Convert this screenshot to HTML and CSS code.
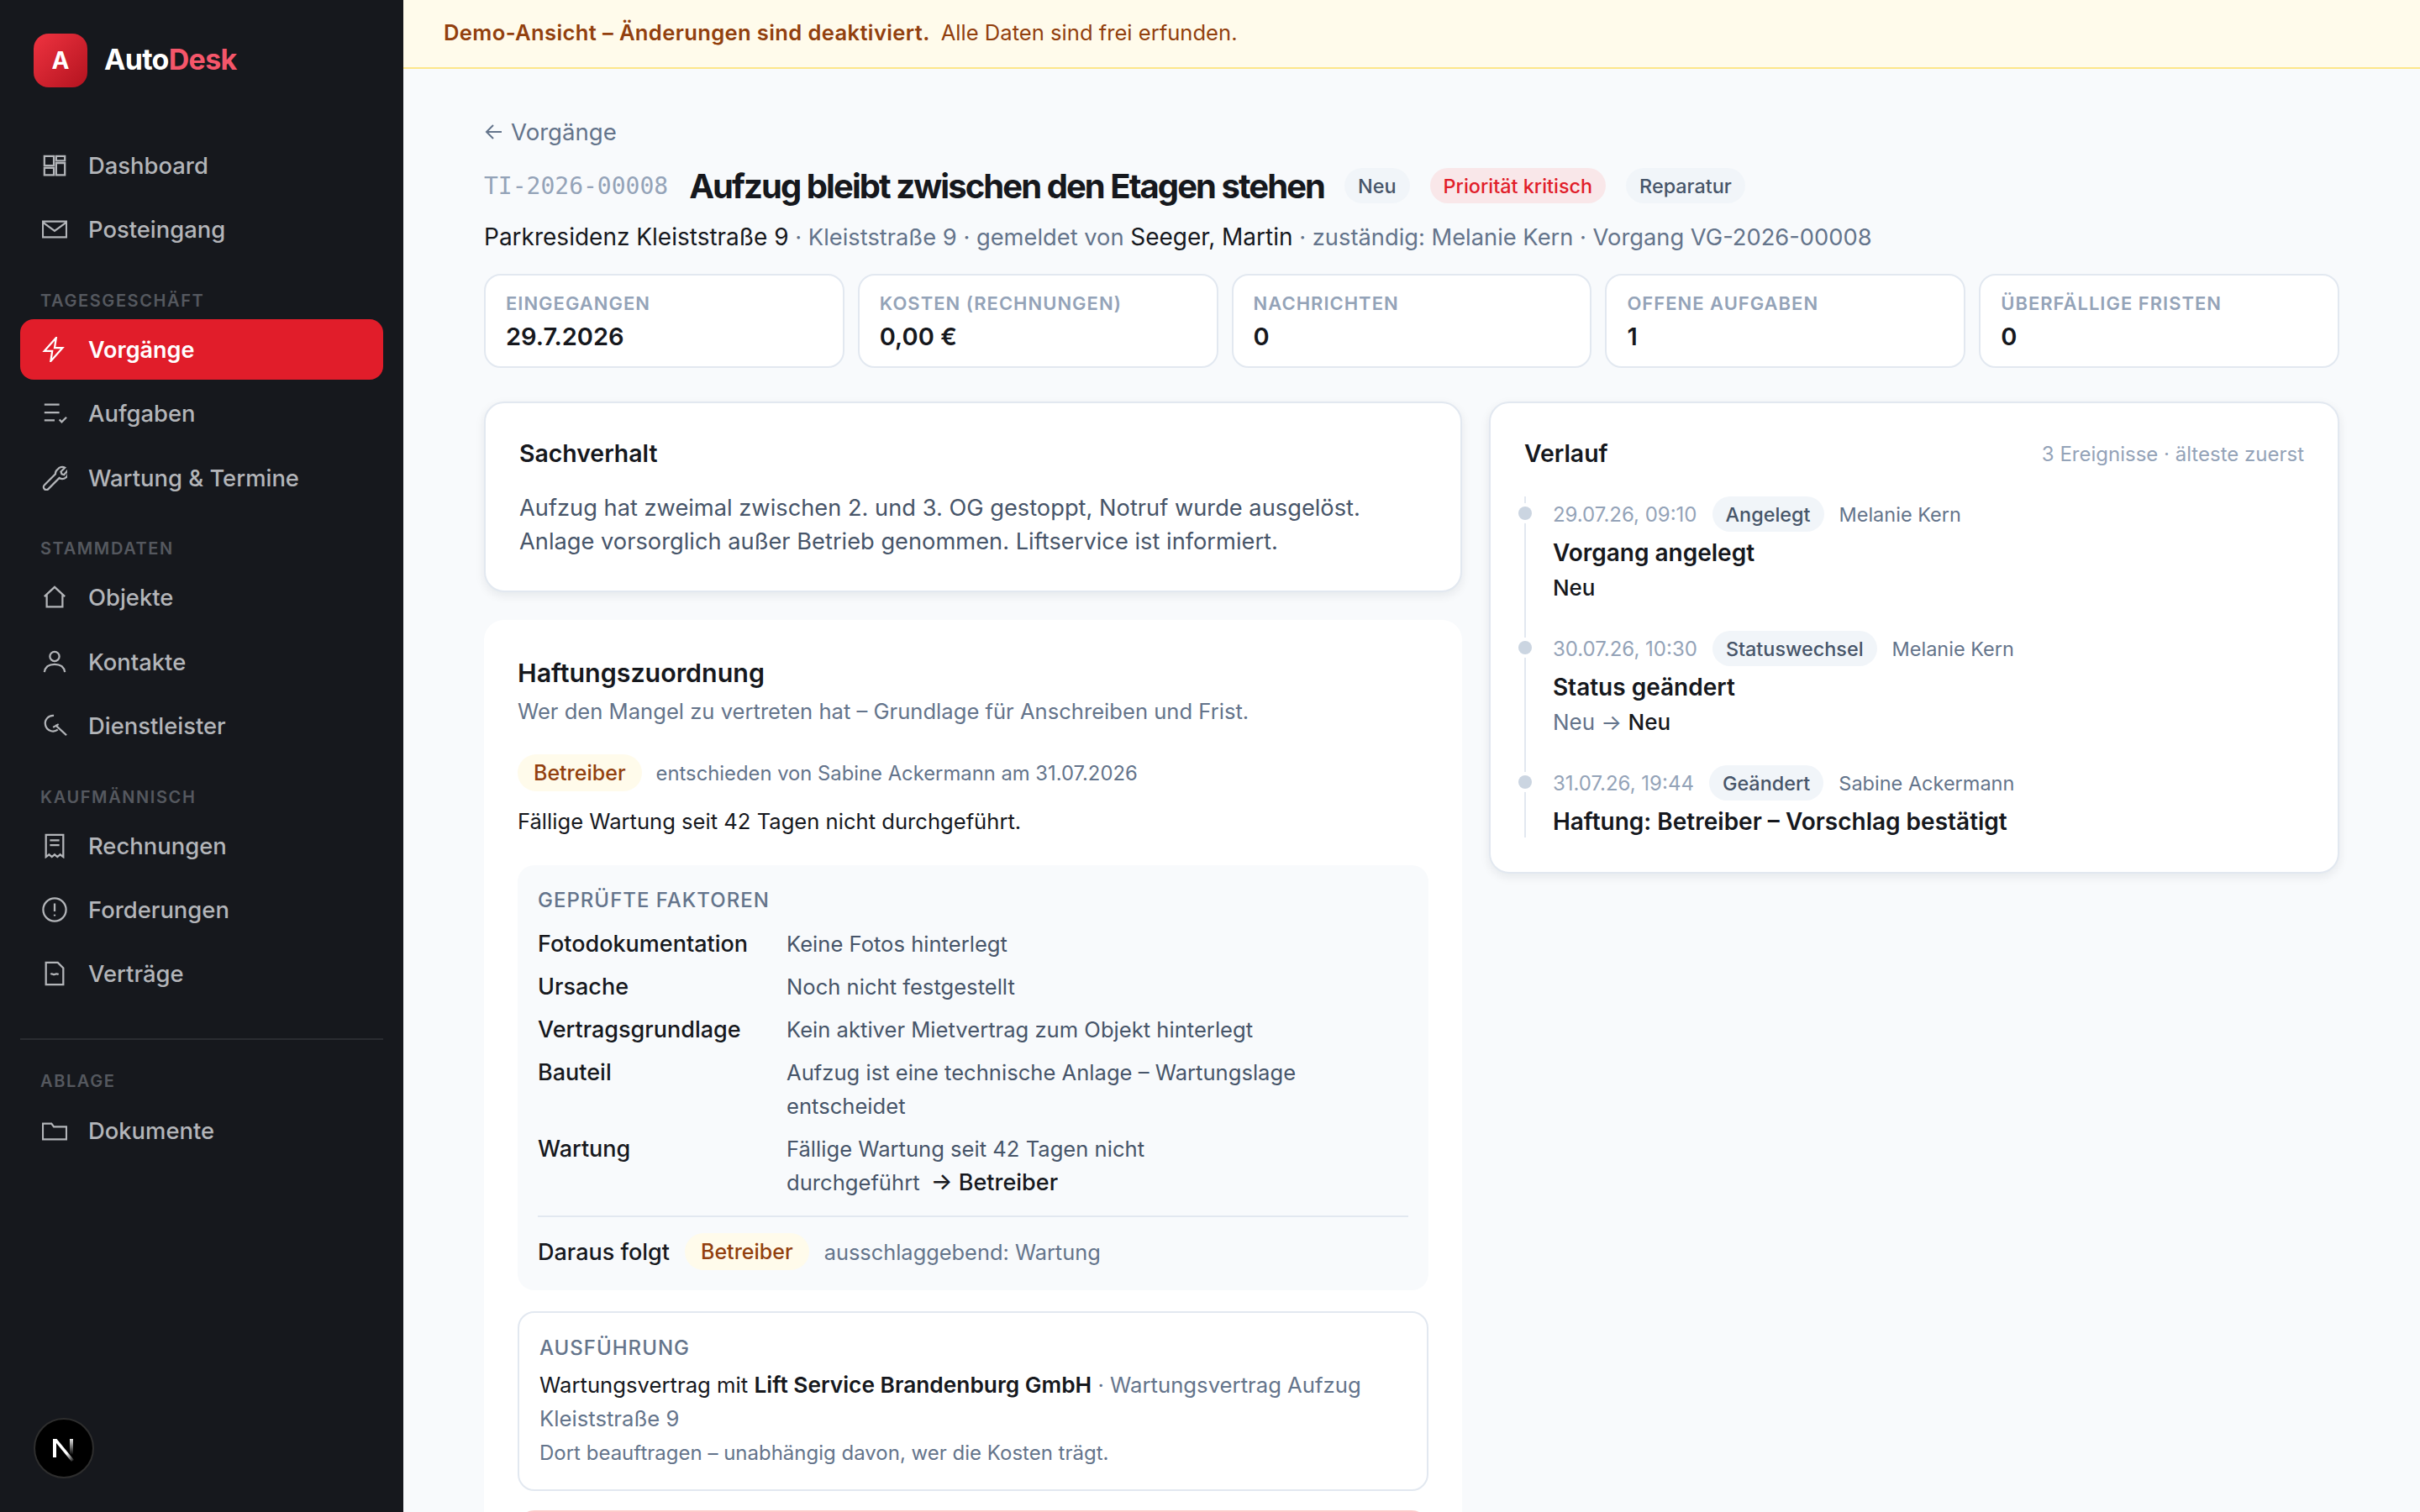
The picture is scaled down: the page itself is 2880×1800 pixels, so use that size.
FILE: index.html
```html
<!DOCTYPE html>
<html lang="de">
<head>
    <meta charset="UTF-8">
    <title>AutoDesk – Vorgang</title>
    <link rel="stylesheet" href="styles.css">
</head>
<body>
    <div class="app">
        <aside class="sidebar">
            <div class="brand">
                <div class="brand-mark">A</div>
                <div class="brand-name">Auto<span>Desk</span></div>
            </div>
            <nav class="nav">
                <div class="nav-group nav-group-first">
                    <a class="nav-item"><svg class="nav-icon" viewBox="0 0 32 32"><path d="M3 4h12v12H3zM18 4h11v6H18zM3 19h12v9H3zM18 13h11v15H18z"/></svg>Dashboard</a>
                    <a class="nav-item"><svg class="nav-icon" viewBox="0 0 32 32"><path d="M1 6h30v20H1zM1 7l15 11L31 7"/></svg>Posteingang</a>
                </div>
                <div class="nav-group">
                    <div class="nav-label">Tagesgeschäft</div>
                    <a class="nav-item active"><svg class="nav-icon" viewBox="0 0 32 32"><path d="M18 1L3 18h10l-2 13 15-17H16z"/></svg>Vorgänge</a>
                    <a class="nav-item"><svg class="nav-icon" viewBox="0 0 32 32"><path d="M3 5h19M3 15h19M3 25h13M22 24l3 3 6-6"/></svg>Aufgaben</a>
                    <a class="nav-item"><svg class="nav-icon" viewBox="0 0 32 32"><path d="M20 5a7 7 0 0 1 9-2l-5 5 1 3 3 1 4-5a7 7 0 0 1-10 9L8 30a3 3 0 0 1-5-5L17 11a7 7 0 0 1 3-6z"/></svg>Wartung &amp; Termine</a>
                </div>
                <div class="nav-group">
                    <div class="nav-label">Stammdaten</div>
                    <a class="nav-item"><svg class="nav-icon" viewBox="0 0 32 32"><path d="M3 15L16 3l13 12M6 13v15h20V13"/></svg>Objekte</a>
                    <a class="nav-item"><svg class="nav-icon" viewBox="0 0 32 32"><circle cx="16" cy="9" r="6"/><path d="M3 29c1-7 6-10 13-10s12 3 13 10"/></svg>Kontakte</a>
                    <a class="nav-item"><svg class="nav-icon" viewBox="0 0 32 32"><path d="M15 3A10 10 0 1 0 20 21M17 15l14 13M14 18l7-4"/></svg>Dienstleister</a>
                </div>
                <div class="nav-group">
                    <div class="nav-label">Kaufmännisch</div>
                    <a class="nav-item"><svg class="nav-icon" viewBox="0 0 32 32"><path d="M5 2h22v28l-4-3-3.500 3-3.500-3-3.500 3L9 27l-4 3zM10 9h12M10 15h12"/></svg>Rechnungen</a>
                    <a class="nav-item"><svg class="nav-icon" viewBox="0 0 32 32"><circle cx="16" cy="16" r="14.500"/><path d="M16 8v10M16 22v2"/></svg>Forderungen</a>
                    <a class="nav-item"><svg class="nav-icon" viewBox="0 0 32 32"><path d="M5 2h15l7 7v21H5zM11 17c2-2 3 1 5 0s3-1 5 0"/></svg>Verträge</a>
                </div>
                <div class="nav-rule"></div>
                <div class="nav-group nav-group-last">
                    <div class="nav-label">Ablage</div>
                    <a class="nav-item"><svg class="nav-icon" viewBox="0 0 32 32"><path d="M1 7h11l3 4h16v16H1z"/></svg>Dokumente</a>
                </div>
            </nav>
            <div class="dev-badge">
                <svg viewBox="0 0 32 32" width="32" height="32">
                    <defs>
                        <linearGradient id="fade-a" x1="0" y1="0" x2="1" y2="1"><stop offset="0.65" stop-color="#fff"/><stop offset="1" stop-color="#fff" stop-opacity="0"/></linearGradient>
                        <linearGradient id="fade-b" x1="0" y1="0" x2="0" y2="1"><stop offset="0" stop-color="#fff" stop-opacity="0.9"/><stop offset="1" stop-color="#fff" stop-opacity="0"/></linearGradient>
                    </defs>
                    <path d="M3 5h4v22H3z" fill="#fff"/>
                    <path d="M3 5h4.500L28 30l-3 2z" fill="url(#fade-a)"/>
                    <path d="M23 5h4v19h-4z" fill="url(#fade-b)"/>
                </svg>
            </div>
        </aside>

        <div class="main">
            <div class="demo-banner"><strong>Demo-Ansicht – Änderungen sind deaktiviert.</strong><span>Alle Daten sind frei erfunden.</span></div>
            <div class="content">
                <a class="back-link"><svg class="back-arrow" viewBox="0 0 24 24"><path d="M21 12H3M11 4l-8 8 8 8"/></svg>Vorgänge</a>
                <div class="title-row">
                    <span class="case-id">TI-2026-00008</span>
                    <h1>Aufzug bleibt zwischen den Etagen stehen</h1>
                    <span class="pill">Neu</span>
                    <span class="pill pill-red">Priorität kritisch</span>
                    <span class="pill">Reparatur</span>
                </div>
                <p class="subline"><b>Parkresidenz Kleiststraße 9</b> · Kleiststraße 9 · gemeldet von <b>Seeger, Martin</b> · zuständig: Melanie Kern · Vorgang VG-2026-00008</p>

                <div class="kpis">
                    <div class="kpi"><div class="kpi-label">Eingegangen</div><div class="kpi-value">29.7.2026</div></div>
                    <div class="kpi"><div class="kpi-label">Kosten (Rechnungen)</div><div class="kpi-value">0,00 €</div></div>
                    <div class="kpi"><div class="kpi-label">Nachrichten</div><div class="kpi-value">0</div></div>
                    <div class="kpi"><div class="kpi-label">Offene Aufgaben</div><div class="kpi-value">1</div></div>
                    <div class="kpi"><div class="kpi-label">Überfällige Fristen</div><div class="kpi-value">0</div></div>
                </div>

                <div class="columns">
                    <div class="col-left">
                        <section class="card card-line facts-card">
                            <h2>Sachverhalt</h2>
                            <p class="facts">Aufzug hat zweimal zwischen 2. und 3. OG gestoppt, Notruf wurde ausgelöst.<br>Anlage vorsorglich außer Betrieb genommen. Liftservice ist informiert.</p>
                        </section>
                        <section class="card liability">
                            <h2>Haftungszuordnung</h2>
                            <p class="muted">Wer den Mangel zu vertreten hat – Grundlage für Anschreiben und Frist.</p>
                            <div class="decision">
                                <span class="pill-amber">Betreiber</span>
                                <span class="decision-meta">entschieden von Sabine Ackermann am 31.07.2026</span>
                            </div>
                            <p class="reason">Fällige Wartung seit 42 Tagen nicht durchgeführt.</p>

                            <div class="factors">
                                <div class="box-head">Geprüfte Faktoren</div>
                                <dl class="factor-list">
                                    <dt>Fotodokumentation</dt><dd>Keine Fotos hinterlegt</dd>
                                    <dt>Ursache</dt><dd>Noch nicht festgestellt</dd>
                                    <dt>Vertragsgrundlage</dt><dd>Kein aktiver Mietvertrag zum Objekt hinterlegt</dd>
                                    <dt>Bauteil</dt><dd>Aufzug ist eine technische Anlage – Wartungslage<br>entscheidet</dd>
                                    <dt>Wartung</dt><dd>Fällige Wartung seit 42 Tagen nicht<br>durchgeführt <b>→ Betreiber</b></dd>
                                </dl>
                                <div class="result">
                                    <b>Daraus folgt</b>
                                    <span class="pill-amber">Betreiber</span>
                                    <span class="result-meta">ausschlaggebend: Wartung</span>
                                </div>
                            </div>

                            <div class="execution">
                                <div class="box-head">Ausführung</div>
                                <p class="exec-line">Wartungsvertrag mit <b>Lift Service Brandenburg GmbH</b> <span>· Wartungsvertrag Aufzug Kleiststraße 9</span></p>
                                <p class="exec-note">Dort beauftragen – unabhängig davon, wer die Kosten trägt.</p>
                            </div>
                            <div class="next-box"></div>
                        </section>
                    </div>

                    <section class="card card-line history">
                        <div class="history-head">
                            <h2>Verlauf</h2>
                            <span class="history-count">3 Ereignisse · älteste zuerst</span>
                        </div>
                        <ol class="timeline">
                            <li class="event">
                                <div class="event-meta"><time>29.07.26, 09:10</time><span class="pill">Angelegt</span><span class="event-user">Melanie Kern</span></div>
                                <div class="event-title">Vorgang angelegt</div>
                                <div class="event-detail"><b>Neu</b></div>
                            </li>
                            <li class="event">
                                <div class="event-meta"><time>30.07.26, 10:30</time><span class="pill">Statuswechsel</span><span class="event-user">Melanie Kern</span></div>
                                <div class="event-title">Status geändert</div>
                                <div class="event-detail">Neu → <b>Neu</b></div>
                            </li>
                            <li class="event">
                                <div class="event-meta"><time>31.07.26, 19:44</time><span class="pill">Geändert</span><span class="event-user">Sabine Ackermann</span></div>
                                <div class="event-title">Haftung: Betreiber – Vorschlag bestätigt</div>
                            </li>
                        </ol>
                    </section>
                </div>
            </div>
        </div>
    </div>
</body>
</html>
```

FILE: styles.css
```css
* {
    margin: 0;
    padding: 0;
    box-sizing: border-box;
}
html, body {
    height: 100%;
    overflow: hidden;
}
body {
    font-family: Inter, "Noto Sans", sans-serif;
    font-size: 28px;
    color: #16181d;
    background: #f8fafc;
}
.app {
    display: flex;
    height: 100%;
}

/* sidebar */
.sidebar {
    position: relative;
    flex: 0 0 480px;
    background: #16181d;
    padding: 40px 24px;
}
.brand {
    display: flex;
    align-items: center;
    gap: 20px;
    padding-left: 16px;
    height: 64px;
}
.brand-mark {
    width: 64px;
    height: 64px;
    border-radius: 18px;
    display: flex;
    align-items: center;
    justify-content: center;
    background: linear-gradient(135deg, #ef3340, #b3131f);
    color: #fff;
    font-size: 28px;
    font-weight: 700;
}
.brand-name {
    padding-bottom: 3px;
    color: #fff;
    font-size: 34px;
    font-weight: 700;
    letter-spacing: -0.7px;
}
.brand-name span {
    color: #f5566a;
}
.nav {
    margin-top: 57px;
}
.nav-group {
    display: flex;
    flex-direction: column;
    gap: 4.300px;
    margin-top: 34.500px;
}
.nav-group-first {
    margin-top: 0;
}
.nav-label {
    padding-left: 24px;
    font-size: 20px;
    font-weight: 600;
    line-height: 28px;
    letter-spacing: 1.600px;
    text-transform: uppercase;
    color: #55585f;
    margin-bottom: 4px;
}
.nav-item {
    display: flex;
    align-items: center;
    gap: 25px;
    height: 72px;
    padding-left: 26px;
    border-radius: 16px;
    font-size: 27.400px;
    font-weight: 500;
    color: #b3b5b9;
}
.nav-item.active {
    background: #e11d2a;
    color: #fff;
    font-size: 27px;
    font-weight: 600;
}
.nav-icon {
    flex: none;
    width: 30px;
    height: 30px;
    fill: none;
    stroke: currentColor;
    stroke-width: 2.400;
}
.nav-rule {
    height: 2px;
    background: #2a2c31;
    margin-top: 41px;
}
.nav-group-last {
    margin-top: 35px;
}
.dev-badge {
    position: absolute;
    left: 40px;
    top: 1688px;
    width: 72px;
    height: 72px;
    border-radius: 50%;
    background: #000;
    border: 2px solid #2e2e2e;
    display: flex;
    align-items: center;
    justify-content: center;
}

/* main */
.main {
    flex: 1;
    min-width: 0;
}
.demo-banner {
    display: flex;
    align-items: center;
    gap: 13px;
    height: 82px;
    padding: 0 48px 3px;
    background: #fffbeb;
    border-bottom: 2px solid #fde68a;
    font-size: 25.600px;
    color: #92400e;
}
.demo-banner strong {
    font-weight: 600;
    letter-spacing: 0.350px;
}
.content {
    padding: 50px 96px 0;
}
.back-link {
    display: flex;
    align-items: center;
    gap: 8px;
    height: 50px;
    font-size: 27.600px;
    color: #64748b;
}
.back-arrow {
    width: 24px;
    height: 24px;
    fill: none;
    stroke: #64748b;
    stroke-width: 2;
}
.title-row {
    display: flex;
    align-items: center;
    margin-top: 14px;
    height: 50px;
}
.case-id {
    font-family: "DejaVu Sans Mono", monospace;
    font-size: 28px;
    color: #94a3b8;
    margin-right: 25px;
}
h1 {
    font-size: 40px;
    font-weight: 650;
    letter-spacing: -1.940px;
    margin-right: 24px;
}
.pill {
    display: inline-flex;
    align-items: center;
    height: 42px;
    padding: 0 16px;
    margin-right: 24px;
    border-radius: 21px;
    background: #f1f5f9;
    color: #475569;
    font-size: 23.400px;
    font-weight: 500;
}
.pill-red {
    background: #f9e7e9;
    color: #e11d2a;
}
.subline {
    margin-top: 16px;
    font-size: 27.300px;
    line-height: 40px;
    color: #64748b;
}
.subline b {
    font-size: 28px;
    font-weight: 400;
    color: #16181d;
}
.kpis {
    display: grid;
    grid-template-columns: repeat(5, 1fr);
    gap: 16px;
    margin-top: 23px;
}
.kpi {
    height: 112px;
    padding: 18px 24px 0;
    background: #fff;
    border: 2px solid #e2e8f0;
    border-radius: 20px;
}
.kpi-label {
    font-size: 22px;
    font-weight: 600;
    line-height: 30px;
    letter-spacing: 1px;
    text-transform: uppercase;
    color: #94a3b8;
}
.kpi-value {
    margin-top: 5px;
    font-size: 29px;
    font-weight: 600;
    line-height: 40px;
}

/* columns */
.columns {
    display: grid;
    grid-template-columns: 1.15fr 1fr;
    gap: 32px;
    margin-top: 40px;
    align-items: start;
}
.col-left {
    display: flex;
    flex-direction: column;
    gap: 33px;
}
.card {
    background: #fff;
    border-radius: 24px;
    padding: 40px;
}
.card-line {
    border: 2px solid #e2e8f0;
    box-shadow: 0 4px 12px rgba(15, 23, 42, 0.08);
}
.facts-card {
    padding-bottom: 38px;
}
h2 {
    font-size: 28.400px;
    font-weight: 600;
    line-height: 40px;
}
.liability h2 {
    font-size: 30.400px;
    line-height: 46px;
}
.facts {
    margin-top: 25px;
    font-size: 27.250px;
    line-height: 40px;
    color: #475569;
}
.muted {
    margin-top: 4px;
    font-size: 25.600px;
    line-height: 38px;
    color: #64748b;
}
.decision {
    display: flex;
    align-items: center;
    gap: 17px;
    margin-top: 32px;
}
.pill-amber {
    display: inline-flex;
    align-items: center;
    height: 44px;
    padding: 0 19px;
    border-radius: 22px;
    background: #fffbeb;
    color: #92400e;
    font-size: 25px;
    font-weight: 500;
}
.decision-meta {
    font-size: 23.800px;
    color: #64748b;
}
.reason {
    margin-top: 16px;
    font-size: 25.600px;
    line-height: 40px;
}
.factors {
    margin-top: 32px;
    padding: 24px;
    background: #f8fafc;
    border-radius: 20px;
}
.box-head {
    font-size: 24px;
    font-weight: 500;
    line-height: 36px;
    letter-spacing: 1px;
    text-transform: uppercase;
    color: #64748b;
}
.factor-list {
    display: grid;
    grid-template-columns: 296px 1fr;
    row-gap: 11px;
    margin-top: 14px;
    font-size: 27px;
    line-height: 40px;
}
.factor-list dt {
    font-weight: 500;
}
.factor-list dd {
    font-size: 25.600px;
    color: #475569;
}
.factor-list b {
    margin-left: 6px;
    font-size: 27px;
    font-weight: 500;
    color: #16181d;
}
.result {
    display: flex;
    align-items: center;
    gap: 18px;
    margin-top: 19px;
    padding-top: 19px;
    border-top: 2px solid #e2e8f0;
    font-size: 27px;
}
.result b {
    font-weight: 500;
}
.result-meta {
    font-size: 25.400px;
    color: #64748b;
}
.execution {
    margin-top: 25px;
    padding: 24px;
    border: 2px solid #e2e8f0;
    border-radius: 20px;
}
.exec-line {
    margin-top: 6px;
    font-size: 25.700px;
    line-height: 40px;
}
.exec-line b {
    font-size: 26.300px;
    font-weight: 600;
}
.exec-line span {
    color: #64748b;
}
.exec-note {
    margin-top: 2px;
    font-size: 24px;
    line-height: 38px;
    color: #64748b;
}
.next-box {
    height: 120px;
    margin-top: 23px;
    background: #fef2f2;
    border: 2px solid #fecaca;
    border-radius: 20px;
}

/* verlauf */
.history-head {
    display: flex;
    align-items: center;
    justify-content: space-between;
}
.history-count {
    font-size: 24px;
    color: #94a3b8;
}
.timeline {
    position: relative;
    display: flex;
    flex-direction: column;
    gap: 31px;
    margin-top: 31px;
    margin-bottom: 1px;
    padding-left: 32px;
    border-left: 2px solid #e2e8f0;
    list-style: none;
}
.event {
    position: relative;
}
.event::before {
    content: "";
    position: absolute;
    left: -41px;
    top: 12px;
    width: 16px;
    height: 16px;
    border-radius: 50%;
    background: #cbd5e1;
    box-shadow: 0 0 0 4px #fff;
}
.event-meta {
    display: flex;
    align-items: center;
    gap: 18px;
    height: 42px;
}
.event-meta time {
    font-size: 24px;
    color: #94a3b8;
}
.event-meta .pill {
    margin-right: 0;
}
.event-user {
    font-size: 23.500px;
    color: #64748b;
}
.event-title {
    margin-top: 6px;
    font-size: 28px;
    font-weight: 600;
    line-height: 38px;
}
.event-detail {
    margin-top: 3px;
    font-size: 26px;
    line-height: 40px;
    color: #64748b;
}
.event-detail b {
    font-weight: 500;
    color: #16181d;
}
```
